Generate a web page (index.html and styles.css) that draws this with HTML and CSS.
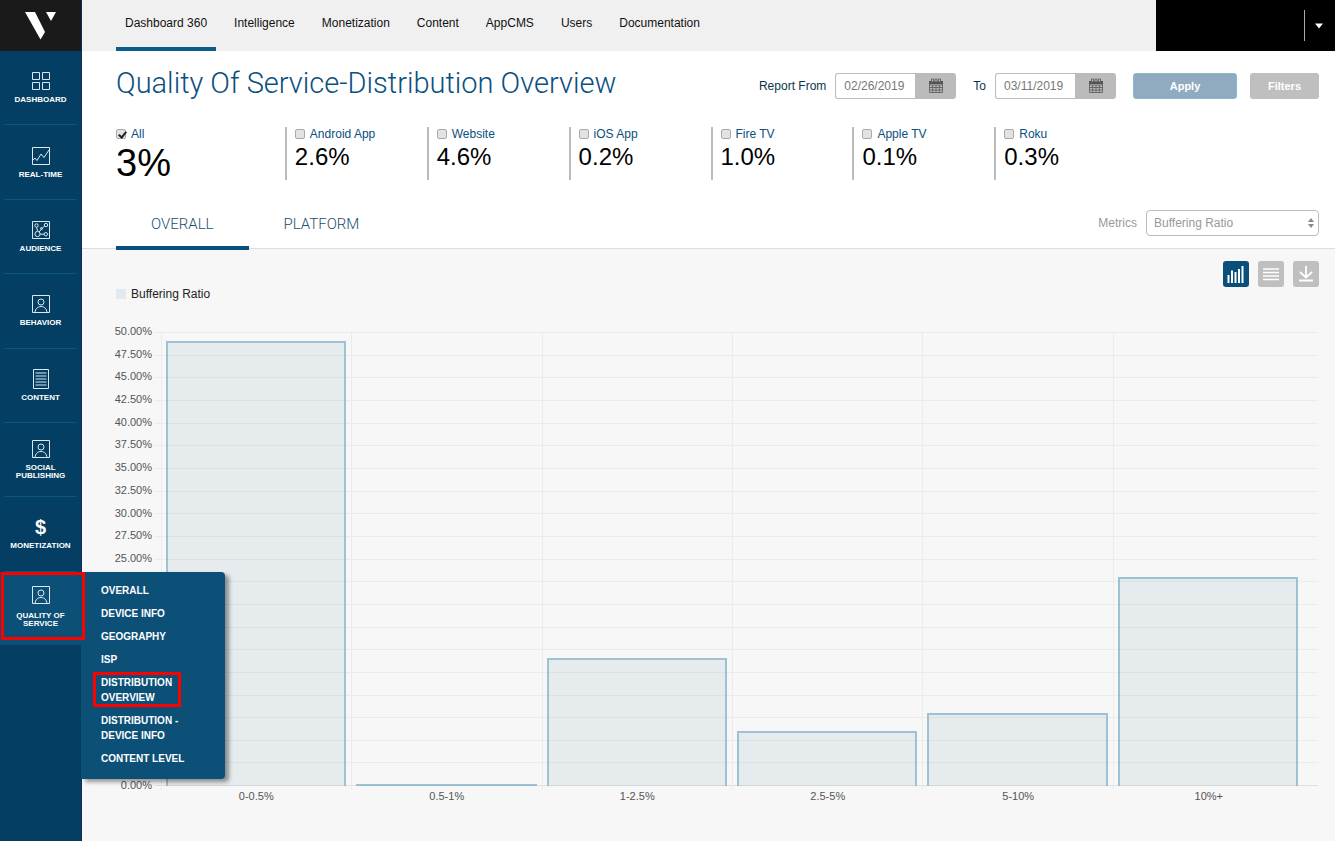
FILE: index.html
```html
<!DOCTYPE html>
<html lang="en">
<head>
<meta charset="utf-8">
<title>Quality Of Service-Distribution Overview</title>
<link rel="stylesheet" href="styles.css">
</head>
<body>
<svg class="defs" aria-hidden="true">
  <symbol id="person" viewBox="0 0 20 20"><path d="M1.5 1.5h17v17h-17zM4 18.5c.4-3.700 2.600-6 6-6s5.600 2.300 6 6"/><circle cx="10" cy="8" r="3"/></symbol>
  <symbol id="calendar" viewBox="0 0 16 16"><path d="M1.500 4h13v10.500h-13zM1.500 7h13M1.500 9.500h13M1.500 12h13M4.700 7v7.500M8 7v7.500M11.300 7v7.500" fill="none" stroke="#555" stroke-width=".8"/><path d="M1 3h14v3H1z" fill="#555"/><path d="M3.500 1h2v3h-2zM7 1h2v3H7zM10.500 1h2v3h-2z" fill="#bbb" stroke="#555" stroke-width=".8"/></symbol>
</svg>
<div class="app">
  <aside class="sidebar">
    <a class="logo" href="#" aria-label="Home"><svg width="32" height="28" viewBox="0 0 32 28"><path d="M0 0h10l10 20-4.500 7.500zM21 0h10l-5 9z" fill="#fff"/></svg></a>
    <nav class="side-nav" aria-label="Reports">
      <a class="side-item" href="#"><svg class="icon" viewBox="0 0 20 20"><path d="M1.500 1.500h7v7h-7zM11.500 1.500h7v7h-7zM1.500 11.500h7v7h-7zM11.500 11.500h7v7h-7z"/></svg><span>DASHBOARD</span></a>
      <a class="side-item" href="#"><svg class="icon" viewBox="0 0 20 20"><path d="M1.500 1.500h17v17h-17zM2 14l2-2 2 2.500 4-6.500 3 3.500L18 4"/></svg><span>REAL-TIME</span></a>
      <a class="side-item" href="#"><svg class="icon" viewBox="0 0 20 20"><path d="M1.500 1.500h17v17h-17zM5.700 7.500 6.500 11M8 12l3-3.500 2.500-2.500M9 14.200h4"/><circle cx="5.500" cy="5.500" r="1.700"/><circle cx="15" cy="5" r="1.700"/><circle cx="10.500" cy="8.500" r="1"/><circle cx="6.500" cy="14" r="2.600"/><circle cx="14.800" cy="14.200" r="1.700"/></svg><span>AUDIENCE</span></a>
      <a class="side-item" href="#"><svg class="icon"><use href="#person"/></svg><span>BEHAVIOR</span></a>
      <a class="side-item" href="#"><svg class="icon" viewBox="0 0 20 20"><path d="M2.500.5h15v19h-15zM4.500 4h11M4.500 7h11M4.500 10h11M4.500 13h11M4.500 16h11"/></svg><span>CONTENT</span></a>
      <a class="side-item" href="#"><svg class="icon"><use href="#person"/></svg><span>SOCIAL PUBLISHING</span></a>
      <a class="side-item" href="#"><b class="dollar" aria-hidden="true">$</b><span>MONETIZATION</span></a>
      <div class="side-group">
        <a class="side-item current" href="#"><svg class="icon"><use href="#person"/></svg><span>QUALITY OF SERVICE</span></a>
        <ul class="submenu">
          <li><a href="#">OVERALL</a></li>
          <li><a href="#">DEVICE INFO</a></li>
          <li><a href="#">GEOGRAPHY</a></li>
          <li><a href="#">ISP</a></li>
          <li><a class="marked" href="#">DISTRIBUTION OVERVIEW</a></li>
          <li><a href="#">DISTRIBUTION - DEVICE INFO</a></li>
          <li><a href="#">CONTENT LEVEL</a></li>
        </ul>
      </div>
    </nav>
  </aside>
  <div class="page">
    <header class="topbar">
      <nav class="top-nav" aria-label="Main">
        <a class="active" href="#">Dashboard 360</a>
        <a href="#">Intelligence</a>
        <a href="#">Monetization</a>
        <a href="#">Content</a>
        <a href="#">AppCMS</a>
        <a href="#">Users</a>
        <a href="#">Documentation</a>
      </nav>
      <div class="account"><button class="account-toggle" type="button" aria-label="Account menu"><svg width="10" height="6" viewBox="0 0 10 6"><path d="M1 0.500h8L5 5.500z" fill="#fff"/></svg></button></div>
    </header>
    <main>
      <div class="heading">
        <h1>Quality Of Service-Distribution Overview</h1>
        <form class="range">
          <label for="from">Report From</label>
          <div class="date"><input id="from" type="text" value="02/26/2019"><button type="button" aria-label="Pick start date"><svg width="16" height="16"><use href="#calendar"/></svg></button></div>
          <label class="to" for="to">To</label>
          <div class="date"><input id="to" type="text" value="03/11/2019"><button type="button" aria-label="Pick end date"><svg width="16" height="16"><use href="#calendar"/></svg></button></div>
          <button class="apply" type="button">Apply</button>
          <button class="filters" type="button">Filters</button>
        </form>
      </div>
      <div class="metrics">
        <div class="metric total"><label><input type="checkbox" checked>All</label><strong>3%</strong></div>
        <div class="metric"><label><input type="checkbox">Android App</label><strong>2.6%</strong></div>
        <div class="metric"><label><input type="checkbox">Website</label><strong>4.6%</strong></div>
        <div class="metric"><label><input type="checkbox">iOS App</label><strong>0.2%</strong></div>
        <div class="metric"><label><input type="checkbox">Fire TV</label><strong>1.0%</strong></div>
        <div class="metric"><label><input type="checkbox">Apple TV</label><strong>0.1%</strong></div>
        <div class="metric"><label><input type="checkbox">Roku</label><strong>0.3%</strong></div>
      </div>
      <div class="tab-row">
        <div class="tabs"><a class="active" href="#">OVERALL</a><a href="#">PLATFORM</a></div>
        <div class="picker">
          <label for="metric">Metrics</label>
          <div class="select"><select id="metric"><option>Buffering Ratio</option></select><svg width="6" height="10" viewBox="0 0 6 10"><path d="M0 4 3 0l3 4zM0 6h6L3 10z" fill="#888"/></svg></div>
        </div>
      </div>
      <section class="panel">
        <div class="tools">
          <button class="on" type="button" aria-label="Chart"><svg width="26" height="26"><path d="M5.500 22v-8M9 22V9.500M12.500 22V11M16 22V8M19.500 22V5" stroke="#fff" stroke-width="2" fill="none"/></svg></button>
          <button type="button" aria-label="Table"><svg width="26" height="26"><path d="M5 8h16M5 11.500h16M5 15h16M5 18.500h16" stroke="#fff" stroke-width="1.500" fill="none"/></svg></button>
          <button type="button" aria-label="Download"><svg width="26" height="26"><path d="M13 5v11M7 11l6 5.500 6-5.500M6 19.500h14" stroke="#fff" stroke-width="1.800" fill="none"/></svg></button>
        </div>
        <div class="legend"><i></i>Buffering Ratio</div>
        <div class="chart">
          <div class="y-axis">
            <span>50.00%</span><span>47.50%</span><span>45.00%</span><span>42.50%</span><span>40.00%</span><span>37.50%</span><span>35.00%</span><span>32.50%</span><span>30.00%</span><span>27.50%</span><span>25.00%</span><span></span><span></span><span></span><span></span><span></span><span></span><span></span><span></span><span></span><span>0.00%</span>
          </div>
          <div class="plot">
            <div class="lines"><i></i><i></i><i></i><i></i><i></i><i></i><i></i><i></i><i></i><i></i><i></i><i></i><i></i><i></i><i></i><i></i><i></i><i></i><i></i><i></i></div>
            <div class="bars">
              <div class="slot"><div class="bar" style="height:98%"></div></div>
              <div class="slot"><div class="bar" style="height:0%"></div></div>
              <div class="slot"><div class="bar" style="height:28.1%"></div></div>
              <div class="slot"><div class="bar" style="height:12.1%"></div></div>
              <div class="slot"><div class="bar" style="height:16%"></div></div>
              <div class="slot"><div class="bar" style="height:46.1%"></div></div>
            </div>
          </div>
          <div class="x-axis"><span>0-0.5%</span><span>0.5-1%</span><span>1-2.5%</span><span>2.5-5%</span><span>5-10%</span><span>10%+</span></div>
        </div>
      </section>
    </main>
  </div>
</div>
</body>
</html>
```
FILE: styles.css
```css
* { box-sizing: border-box; }
body {
  margin: 0;
  background: #f7f7f7;
  color: #111;
  font: 12px/14px "Liberation Sans", Arial, sans-serif;
}
a { color: inherit; text-decoration: none; }
button, input, select { font: inherit; margin: 0; }
button { padding: 0; border: 0; cursor: pointer; }
svg { display: block; }
.defs { position: absolute; width: 0; height: 0; }

.app { display: flex; min-height: 100vh; }
.page { flex: 1; min-width: 0; }

/* Sidebar */
.sidebar { width: 82px; flex: none; background: #043f63; border-right: 1px solid #0b2f5c; color: #fff; }
.logo { display: flex; align-items: center; justify-content: center; height: 51px; background: #1a1a1a; }
.side-nav { display: flex; flex-direction: column; height: 594px; }
.side-nav > * { flex: 1; }
.side-item {
  display: flex;
  flex-direction: column;
  align-items: center;
  justify-content: center;
  gap: 5px;
  margin: 0 4px;
  border-bottom: 1px solid #0b5380;
  font-size: 8px;
  line-height: 8px;
  font-weight: bold;
  text-align: center;
}
.icon { width: 20px; height: 20px; fill: none; stroke: #dce8ef; stroke-width: 1; }
.dollar { font-size: 20px; line-height: 20px; }
.side-group { position: relative; display: flex; background: #0c5077; }
.side-group .side-item { flex: 1; gap: 7px; padding-bottom: 4px; border: 0; }
.side-group::after {
  content: "";
  position: absolute;
  z-index: 3;
  inset: 0 -4px 5px 1px;
  border: 3px solid #f00;
}
.submenu {
  position: absolute;
  z-index: 2;
  top: 0;
  left: 100%;
  width: 144px;
  margin: 0;
  padding: 11px 16px 13px 20px;
  display: grid;
  gap: 8px;
  list-style: none;
  background: #0c5077;
  border-radius: 0 4px 4px 0;
  box-shadow: 4px 3px 4px rgba(0, 0, 0, .4);
  font-size: 10px;
  line-height: 15px;
  font-weight: bold;
}
.submenu a { display: block; width: 84px; }
.submenu .marked { position: relative; }
.marked::after { content: ""; position: absolute; inset: -3px 4px -2px -8px; border: 3px solid #f00; }

/* Top bar */
.topbar { display: flex; justify-content: space-between; height: 51px; background: #f0f0f0; }
.top-nav { display: flex; gap: 9px; padding-left: 34px; }
.top-nav a { padding: 16px 9px 0; border-bottom: 4px solid transparent; }
.top-nav .active { border-color: #0a5f8a; }
.account { display: flex; align-items: center; justify-content: flex-end; width: 179px; background: #000; }
.account-toggle { display: flex; align-items: center; width: 31px; height: 31px; padding-left: 9px; background: none; border-left: 1px solid #aaa; }

/* Heading and date range */
main { background: #fff; }
.heading { display: flex; align-items: center; justify-content: space-between; padding: 12px 16px 0 34px; }
h1 { margin: 0; font: 300 29px/40px Roboto, sans-serif; color: #0a5080; }
.range { display: flex; align-items: center; gap: 9px; padding-top: 6px; color: #0c3448; }
.range .to { margin-left: 8px; }
.date { display: flex; height: 26px; }
.date input { width: 80px; padding: 0 8px; border: 1px solid #bbb; border-right: 0; border-radius: 3px 0 0 3px; color: #777; }
.date button { display: flex; align-items: center; justify-content: center; width: 41px; background: #bbb; border-radius: 0 3px 3px 0; }
.apply, .filters { height: 26px; border-radius: 3px; color: #fff; font-size: 11px; font-weight: bold; }
.apply { width: 104px; margin-left: 8px; background: #90abbf; border: 1px solid #85bbcc; }
.filters { width: 69px; margin-left: 4px; background: #bfbfbf; }

/* Platform metrics */
.metrics { display: grid; grid-template-columns: 169fr repeat(6, 142fr) 183fr; padding: 24px 16px 0 34px; }
.metric { height: 53px; padding-left: 8px; border-left: 2px solid #bbb; }
.metric label { display: flex; align-items: center; gap: 5px; height: 14px; color: #0a4f7d; }
.metric input {
  appearance: none;
  width: 10px;
  height: 10px;
  border: 1px solid #aaa;
  border-radius: 2px;
  background: #e2e2e2;
}
.metric input:checked::after { content: ""; display: block; width: 3px; height: 6px; margin: 0 0 0 3px; border: solid #222; border-width: 0 2px 2px 0; transform: rotate(40deg); }
.metric strong { display: block; font-size: 24px; line-height: 32px; font-weight: normal; color: #000; }
.metric.total { padding-left: 0; border: 0; }
.metric.total strong { font-size: 38px; line-height: 44px; }

/* Tabs */
.tab-row { display: flex; align-items: flex-end; justify-content: space-between; margin-top: 20px; padding: 0 16px 0 34px; border-bottom: 1px solid #ddd; }
.tabs { display: flex; margin-bottom: -2px; }
.tabs a { padding: 15px 35px 13px; border-bottom: 4px solid transparent; font: 300 15px/18px Roboto, sans-serif; color: #1a506e; }
.tabs .active { border-color: #074f7c; }
.picker { display: flex; align-items: center; gap: 9px; padding-bottom: 12px; color: #999; }
.select { position: relative; }
.select select { appearance: none; width: 173px; height: 26px; padding: 0 7px; border: 1px solid #bbb; border-radius: 4px; background: #fff; color: #999; }
.select svg { position: absolute; right: 5px; top: 8px; pointer-events: none; }

/* Chart */
.panel { padding: 12px 16px 32px 34px; background: #f7f7f7; }
.tools { display: flex; justify-content: flex-end; gap: 9px; }
.tools button { border-radius: 3px; background: #bfbfbf; }
.tools .on { background: #0a4f7a; }
.legend { display: flex; align-items: center; gap: 5px; color: #222; }
.legend i { width: 10px; height: 10px; background: #e3eaef; }
.chart {
  display: grid;
  grid-template-columns: 36px 1fr;
  column-gap: 9px;
  padding-top: 31px;
  font-size: 11px;
  color: #555;
}
.y-axis { display: flex; flex-direction: column; justify-content: space-between; align-items: flex-end; margin: -8px 0 -6px; }
.y-axis span { height: 14px; }
.plot { display: grid; height: 454px; margin-right: 1px; }
.lines, .bars { grid-area: 1 / 1; }
.lines { display: flex; flex-direction: column; margin-left: -6px; border-bottom: 1px solid #e0e0e0; }
.lines i { flex: 1; border-top: 1px solid #ebebeb; }
.bars, .x-axis { display: grid; grid-template-columns: repeat(6, 1fr); padding-right: 15px; }
.bars { margin-bottom: -4px; }
.slot { display: flex; align-items: flex-end; padding: 0 5px 4px 4px; border-left: 1px solid #ebebeb; }
.bar { flex: 1; border: 2px solid rgba(130, 175, 200, .75); border-bottom: 0; background: rgba(15, 80, 120, .07); background-clip: padding-box; }
.x-axis { grid-column: 2; padding-top: 3px; text-align: center; }
```
